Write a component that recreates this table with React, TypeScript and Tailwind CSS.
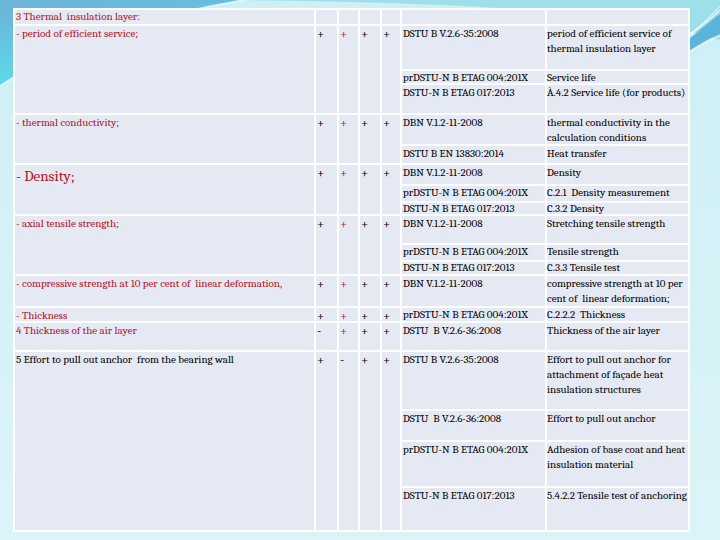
import React from "react";

const RED = "text-[#b3121e]";

type CellProps = { children?: React.ReactNode; className?: string };
function Cell({ children, className = "" }: CellProps) {
  return (
    <div className={`bg-[#e5e9f3] whitespace-pre-wrap font-serif ${className}`}>
      {children}
    </div>
  );
}

type Group = {
  left: React.ReactNode;
  leftClass: string;
  span: string;
  marks: [string, string, string, string];
  refs: { code: string; desc: string; lh?: string }[];
};

const groups: Group[] = [
  {
    left: "- period of efficient service;",
    leftClass: RED,
    span: "row-span-3",
    marks: ["+", "+", "+", "+"],
    refs: [
      { code: "DSTU B V.2.6-35:2008", desc: "period of efficient service of thermal insulation layer" },
      { code: "prDSTU-N B ETAG 004:201X", desc: "Service life", lh: "leading-[13px]" },
      { code: "DSTU-N B ETAG 017:2013", desc: "À.4.2 Service life (for products)" },
    ],
  },
  {
    left: "- thermal conductivity;",
    leftClass: RED,
    span: "row-span-2",
    marks: ["+", "+", "+", "+"],
    refs: [
      { code: "DBN V.1.2-11-2008", desc: "thermal conductivity in the calculation conditions" },
      { code: "DSTU B EN 13830:2014", desc: "Heat transfer" },
    ],
  },
  {
    left: <span className="text-[15px] leading-[20px] block pt-[1px]">- Density;</span>,
    leftClass: RED,
    span: "row-span-3",
    marks: ["+", "+", "+", "+"],
    refs: [
      { code: "DBN V.1.2-11-2008", desc: "Density" },
      { code: "prDSTU-N B ETAG 004:201X", desc: "C.2.1  Density measurement", lh: "leading-[13px]" },
      { code: "DSTU-N B ETAG 017:2013", desc: "C.3.2 Density", lh: "leading-[11px]" },
    ],
  },
  {
    left: "- axial tensile strength;",
    leftClass: RED,
    span: "row-span-3",
    marks: ["+", "+", "+", "+"],
    refs: [
      { code: "DBN V.1.2-11-2008", desc: "Stretching tensile strength" },
      { code: "prDSTU-N B ETAG 004:201X", desc: "Tensile strength", lh: "leading-[14px]" },
      { code: "DSTU-N B ETAG 017:2013", desc: "C.3.3 Tensile test", lh: "leading-[12px]" },
    ],
  },
  {
    left: "- compressive strength at 10 per cent of  linear deformation,",
    leftClass: RED,
    span: "",
    marks: ["+", "+", "+", "+"],
    refs: [{ code: "DBN V.1.2-11-2008", desc: "compressive strength at 10 per cent of  linear deformation;" }],
  },
  {
    left: "- Thickness",
    leftClass: RED,
    span: "",
    marks: ["+", "+", "+", "+"],
    refs: [{ code: "prDSTU-N B ETAG 004:201X", desc: "C.2.2.2  Thickness", lh: "leading-[13px]" }],
  },
  {
    left: "4 Thickness of the air layer",
    leftClass: RED,
    span: "",
    marks: ["-", "+", "+", "+"],
    refs: [{ code: "DSTU  B V.2.6-36:2008", desc: "Thickness of the air layer" }],
  },
  {
    left: "5 Effort to pull out anchor  from the bearing wall",
    leftClass: "text-black",
    span: "row-span-4",
    marks: ["+", "-", "+", "+"],
    refs: [
      { code: "DSTU B V.2.6-35:2008", desc: "Effort to pull out anchor for attachment of façade heat insulation structures" },
      { code: "DSTU  B V.2.6-36:2008", desc: "Effort to pull out anchor" },
      { code: "prDSTU-N B ETAG 004:201X", desc: "Adhesion of base coat and heat insulation material" },
      { code: "DSTU-N B ETAG 017:2013", desc: "5.4.2.2 Tensile test of anchoring" },
    ],
  },
];

function Background() {
  return (
    <svg className="absolute inset-0" width="720" height="540" viewBox="0 0 720 540">
      <defs>
        <linearGradient id="lb" x1="0" y1="0" x2="0.3" y2="1">
          <stop offset="0" stopColor="#6cb3d6" />
          <stop offset="1" stopColor="#5cdcec" />
        </linearGradient>
        <linearGradient id="pale" x1="0" y1="0" x2="0" y2="1">
          <stop offset="0" stopColor="#cdeff5" />
          <stop offset="1" stopColor="#dcf4f8" />
        </linearGradient>
      </defs>
      <rect width="720" height="540" fill="url(#pale)" />
      <path d="M230 0 H720 V40 C640 12 460 2 230 0 Z" fill="#9fdfe9" />
      <path d="M0 0 H245 C170 12 70 40 0 86 Z" fill="url(#lb)" />
      <path d="M245 0 C170 12 70 40 0 86" stroke="#e8fbfd" strokeWidth="2" fill="none" opacity="0.8" />
      <path d="M660 60 C690 40 705 25 720 14 V34 C705 40 690 50 660 70 Z" fill="#5db3da" />
      <path d="M665 52 C690 36 705 24 720 10" stroke="#e9fafc" strokeWidth="1.2" fill="none" />
      <path d="M670 48 C692 33 706 22 720 6" stroke="#e9fafc" strokeWidth="1" fill="none" />
      <path d="M660 72 C690 52 705 42 720 36" stroke="#e9fafc" strokeWidth="1" fill="none" />
    </svg>
  );
}

export default function App() {
  return (
    <div className="relative w-[720px] h-[540px] overflow-hidden bg-[#daf3f7] font-serif">
      <Background />
      <div className="relative pt-[8px] pl-[13px]">
        <div className="grid w-fit bg-white p-[2px] gap-[2px] grid-cols-[299px_21px_19px_20px_18px_143px_141px] grid-rows-[14px_43px_12px_28px_29px_17px_19px_15px_11px_27px_15px_12px_30px_13px_27px_57px_29px_44px_42px]">
          <Cell className={`${RED} text-[11px] pl-[1px] leading-[14px]`}>3 Thermal  insulation layer:</Cell>
          <Cell />
          <Cell />
          <Cell />
          <Cell />
          <Cell />
          <Cell />
          {groups.map((g, gi) => (
            <React.Fragment key={gi}>
              <Cell className={`${g.span} ${g.leftClass} text-[11px] pl-[1px] leading-[15px]`}>{g.left}</Cell>
              {g.marks.map((m, mi) => (
                <Cell
                  key={mi}
                  className={`${g.span} text-[13px] pl-[1px] leading-[15px] ${mi === 1 && m === "+" ? "text-[#c0182a]" : "text-black"}`}
                >
                  {m}
                </Cell>
              ))}
              {g.refs.map((r, ri) => (
                <React.Fragment key={ri}>
                  <Cell className={`text-[11px] pl-[1px] text-black ${r.lh ?? "leading-[15px]"}`}>{r.code}</Cell>
                  <Cell className={`text-[11px] pl-0 text-black ${r.lh ?? "leading-[15px]"}`}>{r.desc}</Cell>
                </React.Fragment>
              ))}
            </React.Fragment>
          ))}
        </div>
      </div>
    </div>
  );
}
